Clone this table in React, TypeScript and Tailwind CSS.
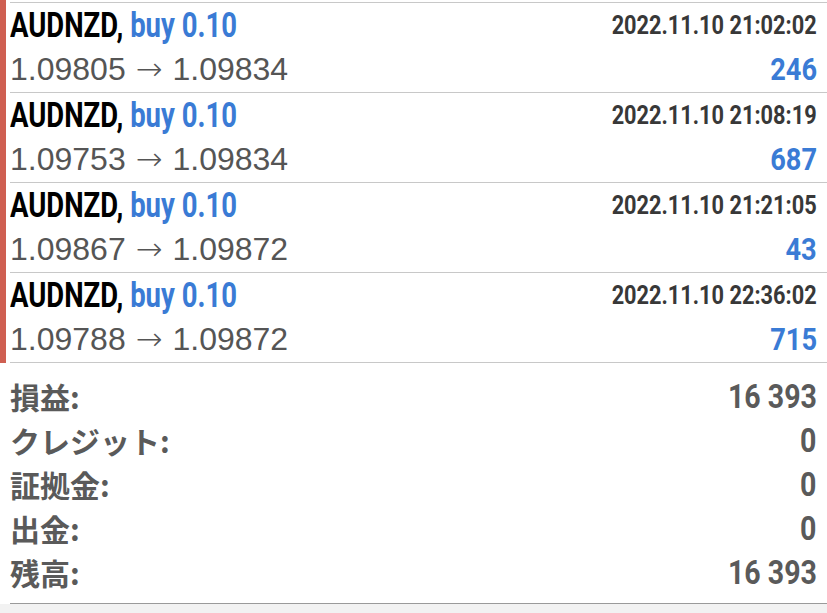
import React from "react"

interface Deal {
  symbol: string
  side: string
  open: string
  close: string
  time: string
  profit: string
}

const deals: Deal[] = [
  { symbol: "AUDNZD,", side: "buy 0.10", open: "1.09805", close: "1.09834", time: "2022.11.10 21:02:02", profit: "246" },
  { symbol: "AUDNZD,", side: "buy 0.10", open: "1.09753", close: "1.09834", time: "2022.11.10 21:08:19", profit: "687" },
  { symbol: "AUDNZD,", side: "buy 0.10", open: "1.09867", close: "1.09872", time: "2022.11.10 21:21:05", profit: "43" },
  { symbol: "AUDNZD,", side: "buy 0.10", open: "1.09788", close: "1.09872", time: "2022.11.10 22:36:02", profit: "715" },
]

const summary = [
  { label: "損益:", value: "16 393" },
  { label: "クレジット:", value: "0" },
  { label: "証拠金:", value: "0" },
  { label: "出金:", value: "0" },
  { label: "残高:", value: "16 393" },
]

// iOS-style condensed bold, squeezed a little from Roboto
const narrow = "font-['Roboto','Noto_Sans_CJK_JP',sans-serif] font-bold inline-block whitespace-nowrap"
const regular = "font-['Liberation_Sans','Noto_Sans_CJK_JP',sans-serif]"

export default function App() {
  return (
    <div className="w-[827px] h-[613px] bg-white overflow-hidden flex flex-col">
      {/* Deals list */}
      <div className="flex flex-col">
        {deals.map((d, i) => (
          <div key={i} className={`flex ${i === 0 ? "h-[93px]" : "h-[90px]"}`}>
            <div className="w-[6px] bg-[#cf5f52]"></div>
            <div
              className={`flex-1 ml-[4px] pr-[10px] flex flex-col h-[90px] border-b border-[#c8c8c8] ${i === 0 ? "border-t mt-[2px] h-[91px]" : ""}`}
            >
              <div className="flex items-center justify-between h-[44px] pt-[1px]">
                <span className={`${narrow} text-[35px] leading-none origin-left scale-x-[0.785] text-black`}>
                  {d.symbol} <span className="text-[#3a7bd5]">{d.side}</span>
                </span>
                <span className={`${narrow} text-[25px] leading-none origin-right scale-x-[0.87] text-[#383838]`}>
                  {d.time}
                </span>
              </div>
              <div className="flex items-center justify-between h-[44px]">
                <span className={`${regular} text-[32px] text-[#555] leading-none whitespace-nowrap`}>
                  {d.open}
                  <span className="font-['DejaVu_Sans',sans-serif] font-extralight mx-[10px]">→</span>
                  {d.close}
                </span>
                <span className={`${narrow} text-[32px] leading-none origin-right scale-x-[0.85] text-[#3a7bd5]`}>
                  {d.profit}
                </span>
              </div>
            </div>
          </div>
        ))}
      </div>

      {/* Summary */}
      <div className="ml-[10px] pr-[10px] pt-[11px] pb-[9px] border-b border-[#9a9a9a] flex flex-col">
        {summary.map((s, i) => (
          <div key={i} className="flex items-center justify-between h-[44px]">
            <span className="font-['Noto_Sans_CJK_JP',sans-serif] font-bold text-[30px] text-[#5a5a5a] leading-none">
              {s.label}
            </span>
            <span className={`${narrow} text-[34px] leading-none origin-right scale-x-[0.84] text-[#5a5a5a]`}>
              {s.value}
            </span>
          </div>
        ))}
      </div>
      <div className="flex-1 bg-[#f2f2f2]"></div>
    </div>
  )
}
